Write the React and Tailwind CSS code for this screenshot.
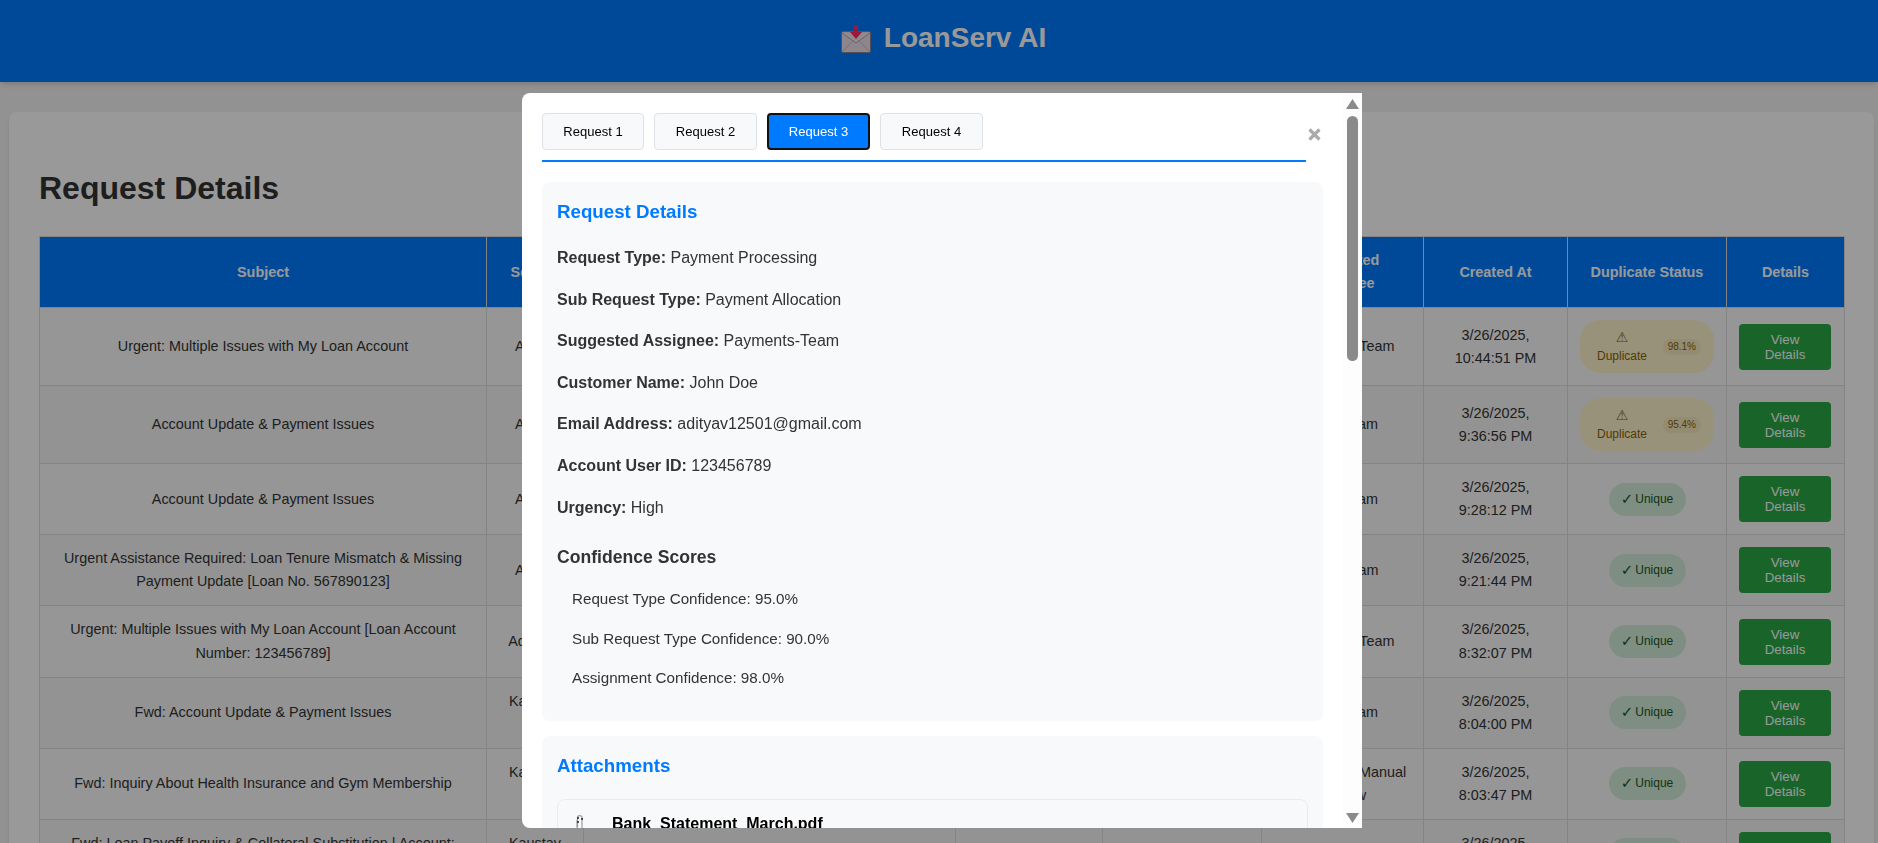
const rows = [
  { subject: "Urgent: Multiple Issues with My Loan Account", sender: "Aditya", type: "Payment", sub: "Allocation", assignee: "Payments-Team", date: "3/26/2025,", time: "10:44:51 PM", dup: "98.1%" },
  { subject: "Account Update & Payment Issues", sender: "Aditya", type: "Account", sub: "Update", assignee: "Loan Team", date: "3/26/2025,", time: "9:36:56 PM", dup: "95.4%" },
  { subject: "Account Update & Payment Issues", sender: "Aditya", type: "Account", sub: "Update", assignee: "Loan Team", date: "3/26/2025,", time: "9:28:12 PM" },
  { subject: "Urgent Assistance Required: Loan Tenure Mismatch & Missing Payment Update [Loan No. 567890123]", sender: "Aditya", type: "Loan", sub: "Tenure", assignee: "Loan-Team", date: "3/26/2025,", time: "9:21:44 PM" },
  { subject: "Urgent: Multiple Issues with My Loan Account [Loan Account Number: 123456789]", sender: "Aditya V", type: "Payment", sub: "Allocation", assignee: "Payments-Team", date: "3/26/2025,", time: "8:32:07 PM" },
  { subject: "Fwd: Account Update & Payment Issues", sender: "Kaustav Das", type: "Account", sub: "Update", assignee: "Loan Team", date: "3/26/2025,", time: "8:04:00 PM" },
  { subject: "Fwd: Inquiry About Health Insurance and Gym Membership", sender: "Kaustav Das", type: "Other", sub: "General", assignee: "Compliance Manual Review", date: "3/26/2025,", time: "8:03:47 PM" },
  { subject: "Fwd: Loan Payoff Inquiry & Collateral Substitution | Account: 4455667788", sender: "Kaustav Das", type: "Loan Payoff", sub: "", assignee: "Loan Team", date: "3/26/2025,", time: "7:58:20 PM" },
];

const details = [
  ["Request Type:", "Payment Processing"],
  ["Sub Request Type:", "Payment Allocation"],
  ["Suggested Assignee:", "Payments-Team"],
  ["Customer Name:", "John Doe"],
  ["Email Address:", "adityav12501@gmail.com"],
  ["Account User ID:", "123456789"],
  ["Urgency:", "High"],
];

const scores = [
  "Request Type Confidence: 95.0%",
  "Sub Request Type Confidence: 90.0%",
  "Assignment Confidence: 98.0%",
];

const headers = ["Subject", "Sender", "Summary", "Request Type", "Sub Request Type", "Suggested Assignee", "Created At", "Duplicate Status", "Details"];

const StatusBadge = ({ dup }) => {
  if (dup) {
    return (
      <div className="mx-auto flex h-[53px] w-[134px] items-center justify-between rounded-[20px] bg-[#fff3cd] pl-[17px] pr-[13px] text-[12px] text-[#856404]">
        <div className="flex flex-col items-center">
          <span className="h-[19px] font-['DejaVu_Sans',sans-serif] text-[14px] leading-[19px]">⚠</span>
          <span>Duplicate</span>
        </div>
        <span className="rounded-[10px] bg-[#f7e9be] px-[5px] text-[10px]">{dup}</span>
      </div>
    );
  }
  return (
    <div className="mx-auto flex h-[33px] w-[77px] items-center justify-center gap-[2px] rounded-[20px] bg-[#d4edda] text-[12px] text-[#155724]">
      <span className="font-['DejaVu_Sans',sans-serif] text-[15px] leading-none">✓</span>
      <span>Unique</span>
    </div>
  );
};

const MailIcon = () => (
  <svg width="30" height="28" viewBox="0 0 30 28" className="mt-[9px]">
    <rect x="0.5" y="6.5" width="29" height="21" rx="1.5" fill="#ebe0ea" stroke="#8f8890" />
    <path d="M1 8 L15 18 L29 8" fill="#f0e6ee" stroke="#b0a8b2" strokeWidth="1" />
    <path d="M1 27 L12 16 M29 27 L18 16" fill="none" stroke="#c6bcc8" strokeWidth="1" />
    <path d="M13 0 H17 V7 H21 L15 14 L9 7 H13 Z" fill="#ff2a66" />
  </svg>
);

const ClipIcon = () => (
  <svg width="11" height="20" viewBox="0 0 11 20" className="mt-[3px] shrink-0">
    <path d="M3 6 V16 C3 18.5 8 18.5 8 16 V3.5 C8 1 3.5 1 3.5 3.5 V13" fill="none" stroke="#9a9a9a" strokeWidth="1.2" />
    <circle cx="4" cy="4" r="1" fill="#222" />
    <circle cx="8" cy="5" r="1" fill="#222" />
    <circle cx="4" cy="8" r="1" fill="#222" />
  </svg>
);

const Panel = ({ title, className, children }) => (
  <section className={`rounded-lg bg-[#f8f9fa] p-[15px] ${className}`}>
    <h3 className="mb-[18px] text-[18.72px] font-bold text-[#007bff]">{title}</h3>
    {children}
  </section>
);

const Modal = () => (
  <div className="relative h-[735px] w-[840px] overflow-hidden rounded-l-lg bg-white">
    <div className="w-[821px] pl-5 pr-5 pt-5">
      <div className="mb-5 flex items-start">
        <div className="flex w-[764px] gap-[10px] border-b-2 border-[#007bff] pb-[10px]">
          {[1, 2, 3, 4].map((n) => (
            <button
              key={n}
              className={
                n === 3
                  ? "h-[37px] w-[103px] rounded border-2 border-[#111] bg-[#007bff] text-[13px] leading-[15px] text-white"
                  : n === 1
                    ? "h-[37px] w-[102px] rounded border border-[#dee2e6] bg-[#f8f9fa] text-[13px] leading-[15px] text-black"
                    : "h-[37px] w-[103px] rounded border border-[#dee2e6] bg-[#f8f9fa] text-[13px] leading-[15px] text-black"
              }
            >
              Request {n}
            </button>
          ))}
        </div>
        <svg width="13" height="13" viewBox="0 0 13 13" className="ml-[2px] mt-[15px] shrink-0">
          <path d="M1.5 1.5 L11.5 11.5 M11.5 1.5 L1.5 11.5" stroke="#aaa" strokeWidth="3.2" />
        </svg>
      </div>

      <Panel title="Request Details" className="mb-[15px] text-[#333]">
        {details.map(([label, value]) => (
          <p key={label} className="mb-4 text-[16px]">
            <strong>{label}</strong> {value}
          </p>
        ))}
        <h4 className="mb-4 mt-[23px] text-[17.6px] font-bold">Confidence Scores</h4>
        {scores.map((s) => (
          <p key={s} className="mb-[15.2px] pl-[15px] text-[15.2px]">{s}</p>
        ))}
      </Panel>

      <Panel title="Attachments">
        <div className="flex items-start rounded-lg border border-[#e9ecef] bg-[#f8f9fa] pb-3 pl-4 pt-[11px]">
          <ClipIcon />
          <span className="ml-[27px] text-[16px] font-bold text-black">Bank_Statement_March.pdf</span>
        </div>
      </Panel>
    </div>

    {/* scrollbar */}
    <div className="absolute bottom-0 right-0 top-0 flex w-[19px] flex-col items-center bg-[#fdfdfd] pb-[5px] pt-[6px]">
      <svg width="13" height="10" viewBox="0 0 13 10" className="shrink-0">
        <path d="M6.5 0 L13 10 H0 Z" fill="#8a8a8a" />
      </svg>
      <div className="mt-[7px] h-[245px] w-[11px] shrink-0 rounded-md bg-[#8a8a8a]" />
      <svg width="13" height="10" viewBox="0 0 13 10" className="mt-auto shrink-0">
        <path d="M0 0 H13 L6.5 10 Z" fill="#8a8a8a" />
      </svg>
    </div>
  </div>
);

const App = () => {
  return (
    <div className="h-screen overflow-hidden bg-[#f4f4f4] font-['Liberation_Sans',Arial,sans-serif] leading-[1.6] text-[#333]">
      <header className="relative flex h-[82px] justify-center gap-[13px] bg-[#007bff] pl-[9px] pt-4 shadow-md">
        <MailIcon />
        <h1 className="text-[28px] font-bold text-white">LoanServ AI</h1>
      </header>

      <main className="ml-[9px] mr-[4px] mt-[30px] rounded-lg bg-white px-[30px] pt-[51px] shadow-md">
        <h2 className="mb-[22px] text-[32px] font-bold">Request Details</h2>
        <table className="w-full table-fixed border-collapse text-center text-[14.4px]">
          <colgroup>
            <col className="w-[447px]" />
            <col className="w-[97px]" />
            <col className="w-[372px]" />
            <col className="w-[147px]" />
            <col className="w-[159px]" />
            <col className="w-[162px]" />
            <col className="w-[144px]" />
            <col className="w-[159px]" />
            <col className="w-[118px]" />
          </colgroup>
          <thead>
            <tr className="bg-[#007bff] text-white">
              {headers.map((h) => (
                <th key={h} className="border border-[#ddd] p-3 font-bold">{h}</th>
              ))}
            </tr>
          </thead>
          <tbody>
            {rows.map((row, i) => (
              <tr key={i} className={i % 2 === 1 ? "bg-[#f6f6f6]" : "bg-[#fbfbfb]"}>
                <td className="border border-[#ddd] p-3">{row.subject}</td>
                <td className="border border-[#ddd] p-3">{row.sender}</td>
                <td className="border border-[#ddd] p-3"></td>
                <td className="border border-[#ddd] p-3">{row.type}</td>
                <td className="border border-[#ddd] p-3">{row.sub}</td>
                <td className="border border-[#ddd] p-3">{row.assignee}</td>
                <td className="border border-[#ddd] p-3">{row.date}<br />{row.time}</td>
                <td className="border border-[#ddd] p-3"><StatusBadge dup={row.dup} /></td>
                <td className="border border-[#ddd] p-3">
                  <button className="block h-[46px] w-[92px] rounded bg-[#28a745] px-4 text-[13.33px] leading-[15px] text-white">
                    View Details
                  </button>
                </td>
              </tr>
            ))}
          </tbody>
        </table>
      </main>

      <div className="fixed inset-0 flex justify-center bg-black/40 pl-[6px] pt-[93px]">
        <Modal />
      </div>
    </div>
  );
};

export default App;
